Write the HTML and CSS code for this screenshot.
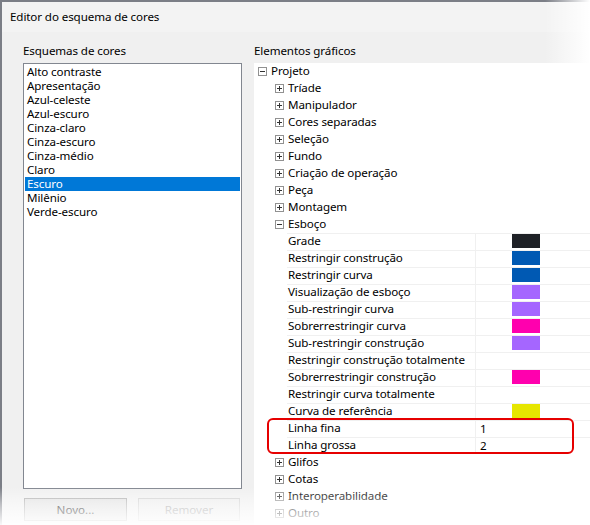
FILE: index.html
```html
<!DOCTYPE html>
<html lang="pt">
<head>
    <meta charset="UTF-8">
    <title>Editor do esquema de cores</title>
    <link rel="stylesheet" href="styles.css">
</head>
<body>
    <div class="window">
        <div class="titlebar">Editor do esquema de cores</div>

        <div class="content">
            <div class="left">
                <div class="label">Esquemas de cores</div>
                <div class="listbox">
                    <div class="item">Alto contraste</div>
                    <div class="item">Apresentação</div>
                    <div class="item">Azul-celeste</div>
                    <div class="item">Azul-escuro</div>
                    <div class="item">Cinza-claro</div>
                    <div class="item">Cinza-escuro</div>
                    <div class="item">Cinza-médio</div>
                    <div class="item">Claro</div>
                    <div class="item selected">Escuro</div>
                    <div class="item">Milênio</div>
                    <div class="item">Verde-escuro</div>
                </div>
                <div class="buttons">
                    <button class="btn">Novo...</button>
                    <button class="btn" disabled>Remover</button>
                </div>
            </div>

            <div class="right">
                <div class="label">Elementos gráficos</div>
                <div class="tree">
                    <div class="node root">
                        <svg class="exp" width="9" height="9" viewBox="0 0 9 9"><rect x="0.5" y="0.5" width="8" height="8"/><path d="M2 4.5h5"/></svg>
                        <span>Projeto</span>
                    </div>
                    <div class="node child"><svg class="exp" width="9" height="9" viewBox="0 0 9 9"><rect x="0.5" y="0.5" width="8" height="8"/><path d="M2 4.5h5M4.5 2v5"/></svg><span>Tríade</span></div>
                    <div class="node child"><svg class="exp" width="9" height="9" viewBox="0 0 9 9"><rect x="0.5" y="0.5" width="8" height="8"/><path d="M2 4.5h5M4.5 2v5"/></svg><span>Manipulador</span></div>
                    <div class="node child"><svg class="exp" width="9" height="9" viewBox="0 0 9 9"><rect x="0.5" y="0.5" width="8" height="8"/><path d="M2 4.5h5M4.5 2v5"/></svg><span>Cores separadas</span></div>
                    <div class="node child"><svg class="exp" width="9" height="9" viewBox="0 0 9 9"><rect x="0.5" y="0.5" width="8" height="8"/><path d="M2 4.5h5M4.5 2v5"/></svg><span>Seleção</span></div>
                    <div class="node child"><svg class="exp" width="9" height="9" viewBox="0 0 9 9"><rect x="0.5" y="0.5" width="8" height="8"/><path d="M2 4.5h5M4.5 2v5"/></svg><span>Fundo</span></div>
                    <div class="node child"><svg class="exp" width="9" height="9" viewBox="0 0 9 9"><rect x="0.5" y="0.5" width="8" height="8"/><path d="M2 4.5h5M4.5 2v5"/></svg><span>Criação de operação</span></div>
                    <div class="node child"><svg class="exp" width="9" height="9" viewBox="0 0 9 9"><rect x="0.5" y="0.5" width="8" height="8"/><path d="M2 4.5h5M4.5 2v5"/></svg><span>Peça</span></div>
                    <div class="node child"><svg class="exp" width="9" height="9" viewBox="0 0 9 9"><rect x="0.5" y="0.5" width="8" height="8"/><path d="M2 4.5h5M4.5 2v5"/></svg><span>Montagem</span></div>
                    <div class="node child"><svg class="exp" width="9" height="9" viewBox="0 0 9 9"><rect x="0.5" y="0.5" width="8" height="8"/><path d="M2 4.5h5"/></svg><span>Esboço</span></div>

                    <div class="props">
                        <div class="prop"><span class="name">Grade</span><span class="value"><i class="swatch" style="background:#1e2126"></i></span></div>
                        <div class="prop"><span class="name">Restringir construção</span><span class="value"><i class="swatch" style="background:#0059b3"></i></span></div>
                        <div class="prop"><span class="name">Restringir curva</span><span class="value"><i class="swatch" style="background:#0059b3"></i></span></div>
                        <div class="prop"><span class="name">Visualização de esboço</span><span class="value"><i class="swatch" style="background:#a566ff"></i></span></div>
                        <div class="prop"><span class="name">Sub-restringir curva</span><span class="value"><i class="swatch" style="background:#a566ff"></i></span></div>
                        <div class="prop"><span class="name">Sobrerrestringir curva</span><span class="value"><i class="swatch" style="background:#ff00ae"></i></span></div>
                        <div class="prop"><span class="name">Sub-restringir construção</span><span class="value"><i class="swatch" style="background:#a566ff"></i></span></div>
                        <div class="prop"><span class="name">Restringir construção totalmente</span><span class="value"></span></div>
                        <div class="prop"><span class="name">Sobrerrestringir construção</span><span class="value"><i class="swatch" style="background:#ff00ae"></i></span></div>
                        <div class="prop"><span class="name">Restringir curva totalmente</span><span class="value"></span></div>
                        <div class="prop"><span class="name">Curva de referência</span><span class="value"><i class="swatch" style="background:#e6e600"></i></span></div>
                        <div class="prop"><span class="name">Linha fina</span><span class="value text">1</span></div>
                        <div class="prop"><span class="name">Linha grossa</span><span class="value text">2</span></div>
                    </div>

                    <div class="node child"><svg class="exp" width="9" height="9" viewBox="0 0 9 9"><rect x="0.5" y="0.5" width="8" height="8"/><path d="M2 4.5h5M4.5 2v5"/></svg><span>Glifos</span></div>
                    <div class="node child"><svg class="exp" width="9" height="9" viewBox="0 0 9 9"><rect x="0.5" y="0.5" width="8" height="8"/><path d="M2 4.5h5M4.5 2v5"/></svg><span>Cotas</span></div>
                    <div class="node child"><svg class="exp" width="9" height="9" viewBox="0 0 9 9"><rect x="0.5" y="0.5" width="8" height="8"/><path d="M2 4.5h5M4.5 2v5"/></svg><span>Interoperabilidade</span></div>
                    <div class="node child"><svg class="exp" width="9" height="9" viewBox="0 0 9 9"><rect x="0.5" y="0.5" width="8" height="8"/><path d="M2 4.5h5M4.5 2v5"/></svg><span>Outro</span></div>

                    <!-- annotation around the line width rows -->
                    <div class="highlight"></div>
                </div>
            </div>
        </div>
    </div>

    <div class="fade-right"></div>
    <div class="fade-bottom"></div>
</body>
</html>
```

FILE: styles.css
```css
body {
    margin: 0;
    width: 590px;
    height: 525px;
    overflow: hidden;
    background: #fff;
    font-family: "Noto Sans", sans-serif;
    font-size: 11.6px;
    letter-spacing: -0.1px;
    color: #000;
}
.window {
    height: 525px;
    box-sizing: border-box;
    border-top: 2px solid #7b7e86;
    border-left: 2px solid #7b7e86;
    background: #f0f0f0;
    overflow: hidden;
}
.titlebar {
    height: 30px;
    line-height: 29px;
    padding-left: 8px;
    background: #f3f3f3;
}
.content {
    display: grid;
    grid-template-columns: 219px 1fr;
    column-gap: 12px;
    padding: 11px 0 0 21px;
}
.label {
    height: 20px;
    line-height: 16px;
}
.listbox {
    height: 426px;
    box-sizing: border-box;
    border: 1px solid #828790;
    background: #fff;
    padding: 1px;
}
.item {
    height: 14px;
    line-height: 14px;
    padding-left: 2px;
    white-space: nowrap;
}
.item.selected {
    background: #0078d7;
    color: #fff;
}
.buttons {
    display: grid;
    grid-template-columns: 103px 102px;
    column-gap: 11px;
    margin-top: 9px;
    padding-left: 1px;
}
.btn {
    height: 23px;
    font-family: inherit;
    font-size: 11.6px;
    background: #e1e1e1;
    border: 1px solid #adadad;
    color: #000;
    padding: 0;
}
.btn:disabled {
    background: #ececec;
    border-color: #cfcfcf;
    color: #a0a0a0;
}
.tree {
    position: relative;
    height: 470px;
    background: #fff;
}
.node {
    display: flex;
    align-items: flex-start;
    height: 17px;
    line-height: 15px;
    white-space: nowrap;
}
.node.root {
    padding-left: 4px;
}
.node.child {
    padding-left: 21px;
}
.exp {
    flex: none;
    margin: 4px 4px 0 0;
}
.exp rect {
    fill: #fff;
    stroke: #919191;
}
.exp path {
    stroke: #333;
    fill: none;
}
.props {
    padding-left: 33px;
}
.prop {
    display: grid;
    grid-template-columns: 188px 1fr;
    height: 17px;
    box-sizing: border-box;
    border-top: 1px solid #f0f0f0;
}
.prop .name {
    line-height: 14px;
    padding-left: 1px;
    white-space: nowrap;
}
.prop .value {
    border-left: 1px solid #f0f0f0;
    padding-left: 36px;
}
.prop .value.text {
    padding-left: 4px;
    line-height: 16px;
}
.swatch {
    display: block;
    width: 28px;
    height: 14px;
}
.highlight {
    position: absolute;
    left: 13px;
    top: 355px;
    width: 307px;
    height: 36px;
    box-sizing: border-box;
    border: 2px solid #e60000;
    border-radius: 6px;
    z-index: 3;
}
.fade-right {
    position: absolute;
    top: 0;
    right: 0;
    width: 45px;
    height: 63px;
    background: linear-gradient(to right, rgba(255,255,255,0), #fff);
}
.fade-bottom {
    position: absolute;
    left: 0;
    bottom: 0;
    width: 590px;
    height: 38px;
    background: linear-gradient(to bottom, rgba(255,255,255,0), rgba(255,255,255,0.5) 45%, rgba(255,255,255,0.95));
}
```
